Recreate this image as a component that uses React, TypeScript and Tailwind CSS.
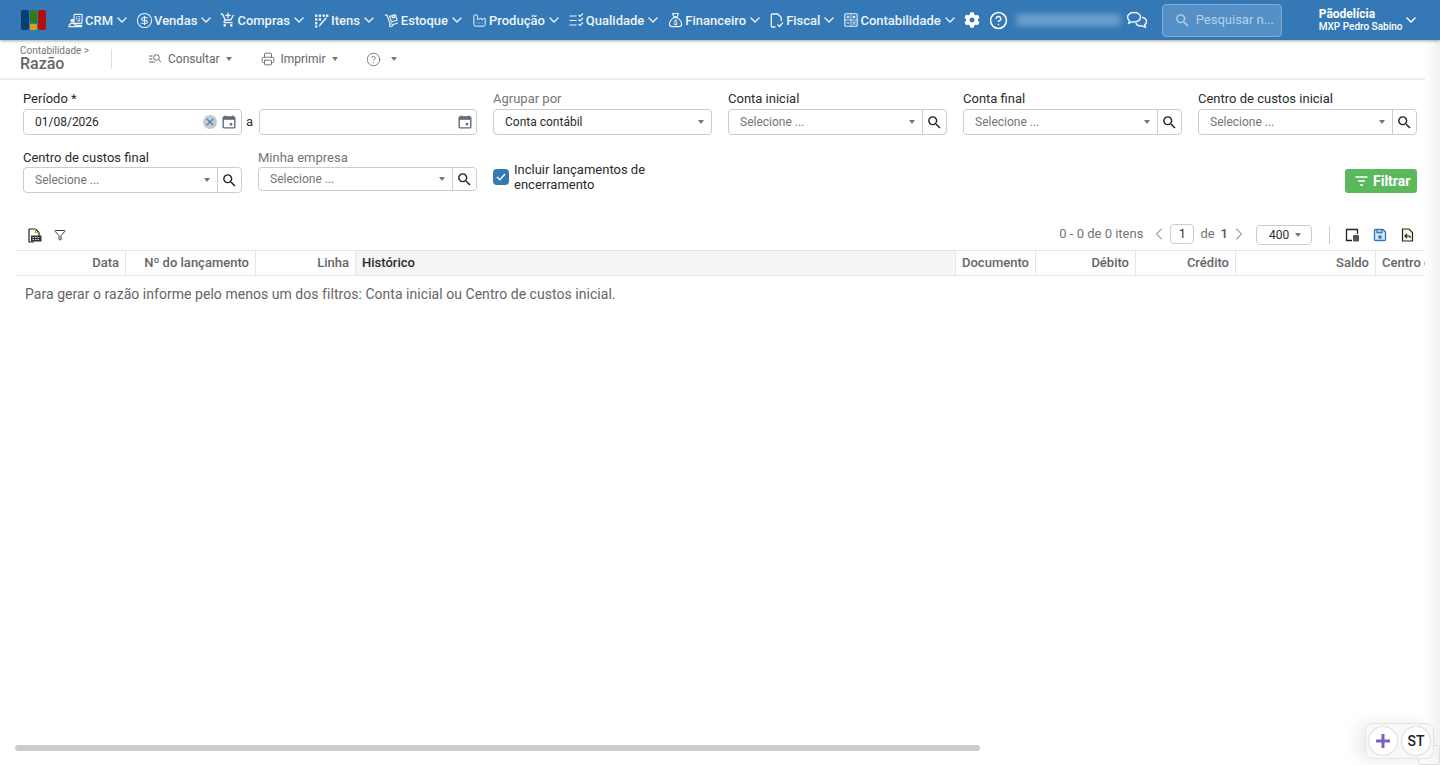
import React from 'react';
import { ChevronDown, ChevronLeft, ChevronRight, CircleDollarSign, CircleHelp, Factory, Funnel, Printer } from 'lucide-react';
import { FaCog } from 'react-icons/fa';
import { MdOutlineAddShoppingCart, MdSearch } from 'react-icons/md';

const IconCrm = () => (
  <svg width="15" height="15" viewBox="0 0 16 16" fill="none" stroke="currentColor" strokeWidth="1.2">
    <rect x="6.5" y="1.5" width="8.5" height="9.5" rx="0.6" />
    <path d="M8.5 4h1.4M11 4h2M8.5 6.2h1.4M11 6.2h2M10 8.4h3" />
    <circle cx="4.5" cy="8" r="2" fill="currentColor" stroke="none" />
    <path d="M1 14.500c0-2.400 1.400-3.500 3.500-3.500S8 12 8 13.200h6.500v1.300z" />
  </svg>
);

const IconItens = () => (
  <svg width="15" height="15" viewBox="0 0 15 15" fill="currentColor">
    <rect x="1" y="1.500" width="2.400" height="2.400" />
    <rect x="4.800" y="1.500" width="2.400" height="2.400" />
    <rect x="8.600" y="1.500" width="2.400" height="2.400" />
    <rect x="12" y="1.500" width="2.400" height="2.400" />
    <rect x="1" y="5.300" width="2.400" height="2.400" />
    <rect x="4.800" y="5.300" width="2.400" height="2.400" />
    <rect x="1" y="9.100" width="2.400" height="2.400" />
    <rect x="1" y="12.500" width="2.400" height="2" />
    <path d="M13 5 6.800 12.300l-1.600 1.700.2-2.400L11.500 4.500z" />
  </svg>
);

const IconEstoque = () => (
  <svg width="15" height="15" viewBox="0 0 16 16" fill="none" stroke="currentColor" strokeWidth="1.200">
    <path d="M1 2.500 3 2l3.500 9.500" />
    <circle cx="7.500" cy="13" r="1.600" />
    <path d="m9.500 12.500 5.500-2" />
    <path d="m6 3.500 6-1.800 2 6-6 1.800zM8.500 2.700l.8 2.500 2-.6-.8-2.500" />
  </svg>
);

const IconQualidade = () => (
  <svg width="15" height="15" viewBox="0 0 15 15" fill="none" stroke="currentColor" strokeWidth="1.200">
    <path d="M0.500 3h7M0.500 7.500h7M0.500 12h7" />
    <path d="m9.500 2 1.500 1.500 3-3M9.500 6.500 11 8l3-3M9.500 11l1.500 1.500 3-3" />
  </svg>
);

const IconBag = () => (
  <svg width="15" height="16" viewBox="0 0 16 17" fill="none" stroke="currentColor" strokeWidth="1.200">
    <path d="M5 1.500h6L9.800 5H6.200zM6.200 5h3.600" />
    <path d="M6 6C3.500 8 1.500 10.500 1.500 13c0 2 1.500 2.500 3 2.500h7c1.500 0 3-.5 3-2.500 0-2.500-2-5-4.500-7z" />
    <text x="8" y="13.500" fontSize="7.500" fontWeight="700" textAnchor="middle" fill="currentColor" stroke="none">$</text>
  </svg>
);

const IconFiscal = () => (
  <svg width="14" height="15" viewBox="0 0 14 15" fill="none" stroke="currentColor" strokeWidth="1.300">
    <path d="M5.500 14H2.300a1 1 0 0 1-1-1V2a1 1 0 0 1 1-1h5.500l3.500 3.500V8" />
    <path d="m7.500 11.500 2 2 3.500-4" />
  </svg>
);

const IconContabil = () => (
  <svg width="14" height="14" viewBox="0 0 14 14" fill="none" stroke="currentColor" strokeWidth="1.100">
    <rect x="0.800" y="0.800" width="12.400" height="12.400" rx="1" />
    <path d="M0.800 7h12.400M7 0.800v12.400" strokeWidth="0.800" />
    <path d="M2.500 4h3M4 2.500v3M8.800 2.800l2.400 2.400M11.200 2.800 8.800 5.200M2.500 10h3M8.500 9.200h3M8.500 11h3" />
  </svg>
);

const IconChat = () => (
  <svg width="22" height="18" viewBox="0 0 22 18" fill="none" stroke="currentColor" strokeWidth="1.500">
    <path d="M8 1.500c-3.600 0-6.500 2-6.500 4.700 0 1.400.8 2.600 2 3.500l-.8 2.600 3.400-1.400c.6.100 1.200.2 1.900.2 3.600 0 6.500-2.100 6.500-4.900S11.600 1.500 8 1.500z" />
    <path d="M16 6.300c2.600.5 4.500 2.100 4.500 4.200 0 1.300-.7 2.400-1.800 3.200l.7 2.600-3.200-1.400c-2.600.4-5.300-.5-6.300-2.700" />
  </svg>
);

const IconConsultar = () => (
  <svg width="14" height="12" viewBox="0 0 14 12" fill="none" stroke="#666" strokeWidth="1">
    <path d="M1 3h3.500M1 6h3.500M1 9h6" />
    <circle cx="8.500" cy="4.500" r="2.800" />
    <path d="m10.500 6.500 2.500 2.500" />
  </svg>
);

const IconCalendar = () => (
  <svg width="14" height="14" viewBox="0 0 14 14" className="shrink-0">
    <path d="M3.500 0.500v2M10.500 0.500v2" stroke="#5f6b76" strokeWidth="1.400" />
    <rect x="1.200" y="1.900" width="11.600" height="11" rx="1" fill="none" stroke="#5f6b76" strokeWidth="1.400" />
    <rect x="1.200" y="1.900" width="11.600" height="2.900" fill="#5f6b76" />
    <rect x="7.800" y="8" width="2.400" height="2.400" fill="#5f6b76" />
  </svg>
);

const IconExportDoc = () => (
  <svg width="15" height="15" viewBox="0 0 15 15" fill="none">
    <path d="M2 1h6.500L12 4.500V8M2 1v13h5" stroke="#222" strokeWidth="1.200" />
    <path d="M8.500 1v3.500H12" stroke="#c98a1c" strokeWidth="1" />
    <rect x="4" y="7.500" width="10.500" height="6" fill="#333" />
    <path d="M5.500 9.500h7.500M5.500 11.500h7.500" stroke="#fff" strokeWidth="0.800" strokeDasharray="1.500 1" />
  </svg>
);

const IconColumns = () => (
  <svg width="15" height="14" viewBox="0 0 15 14" fill="none">
    <path d="M7 12.500H1.500v-11h11V6" stroke="#222" strokeWidth="1.300" />
    <rect x="8" y="7" width="6" height="6.500" rx="0.800" fill="#555" />
  </svg>
);

const IconSave = () => (
  <svg width="14" height="14" viewBox="0 0 14 14" fill="none" stroke="#3478b5" strokeWidth="1.300">
    <path d="M1.500 2.500a1 1 0 0 1 1-1h7.500l2.500 2.500v7.500a1 1 0 0 1-1 1h-9a1 1 0 0 1-1-1z" fill="#d6e6f4" />
    <path d="M4 1.500v3h5v-3" />
    <circle cx="7" cy="9" r="1.200" fill="#3478b5" />
  </svg>
);

const IconRestore = () => (
  <svg width="13" height="14" viewBox="0 0 13 14" fill="none" stroke="#222" strokeWidth="1.200">
    <path d="M1.500 1h6.500l3.500 3.500V13h-10z" fill="#fdf6e3" />
    <path d="M4 8h5M6 6 4 8l2 2M9 8v2" />
  </svg>
);

const Caret = () => <span className="w-0 h-0 border-x-[3.5px] border-x-transparent border-t-[4px] border-t-[#777]" />;

const navItems: { label: string; icon: React.ReactNode }[] = [
  { label: 'CRM', icon: <IconCrm /> },
  { label: 'Vendas', icon: <CircleDollarSign size={17} strokeWidth={1.5} className="-mx-[1px]" /> },
  { label: 'Compras', icon: <MdOutlineAddShoppingCart size={16} className="-mx-[1px]" /> },
  { label: 'Itens', icon: <IconItens /> },
  { label: 'Estoque', icon: <IconEstoque /> },
  { label: 'Produção', icon: <Factory size={15} strokeWidth={1.6} /> },
  { label: 'Qualidade', icon: <IconQualidade /> },
  { label: 'Financeiro', icon: <IconBag /> },
  { label: 'Fiscal', icon: <IconFiscal /> },
  { label: 'Contabilidade', icon: <IconContabil /> },
];

const Header = () => (
  <header className="h-[40px] shrink-0 bg-[#3478b5] text-[#eef4fa] flex items-center shadow-[0_1px_3px_rgba(0,0,0,0.35)] relative z-10">
    <div className="w-[25px] h-[20px] ml-[21px] mr-[22px] flex gap-[1px] shrink-0">
      <span className="w-[8px] h-full rounded-[2px] bg-[#0b3d73]" />
      <span className="w-[8px] h-full flex flex-col gap-[1px]">
        <span className="h-[13px] rounded-[1px] bg-[#2c7d16]" />
        <span className="flex-1 rounded-[1px] bg-[#dc9c1a]" />
      </span>
      <span className="w-[8px] h-full rounded-[2px] bg-[#b30f0f]" />
    </div>
    <nav className="flex items-center gap-[7px]">
      {navItems.map((item) => (
        <div key={item.label} className="flex items-center">
          {item.icon}
          <span className="ml-[2px] text-[13px] font-medium leading-none">{item.label}</span>
          <ChevronDown size={16} strokeWidth={2} className="ml-[1px]" />
        </div>
      ))}
    </nav>
    <FaCog size={16} className="ml-[6px] text-white" />
    <CircleHelp size={19} strokeWidth={1.9} className="ml-[9px] text-white" />
    <div className="w-[105px] h-[12px] ml-[8px] rounded-sm bg-[#6c9fcd] blur-[3px]" />
    <span className="ml-[5px]">
      <IconChat />
    </span>
    <div className="w-[120px] h-[33px] ml-[14px] rounded-[4px] border border-[#80aad1] bg-[#5490c6] flex items-center text-[#b5d0e8]">
      <MdSearch size={17} className="ml-[11px]" />
      <span className="ml-[5px] text-[13px] whitespace-nowrap">Pesquisar n...</span>
    </div>
    <div className="ml-[37px] text-white w-[88px]">
      <p className="text-[12px] font-bold leading-[14px]">Pãodelícia</p>
      <p className="text-[10px] font-medium leading-[12px] whitespace-nowrap">MXP Pedro Sabino</p>
    </div>
    <ChevronDown size={16} strokeWidth={2.2} className="-ml-[4px] text-white" />
  </header>
);

const SubHeader = () => (
  <div className="h-[40px] shrink-0 flex items-center border-b-2 border-[#ececec] text-[#666]">
    <div className="w-[91px] ml-[20px] -mt-[2px]">
      <p className="mb-[1px] text-[10px] leading-[10px] text-[#777]">Contabilidade &gt;</p>
      <p className="text-[16px] font-medium leading-[14px] text-[#666]">Razão</p>
    </div>
    <div className="w-px h-[20px] bg-[#ddd]" />
    <div className="ml-[36px] flex items-center gap-[6px]">
      <IconConsultar />
      <span className="text-[12px]">Consultar</span>
      <Caret />
    </div>
    <div className="ml-[29px] flex items-center gap-[6px]">
      <Printer size={14} strokeWidth={1.5} />
      <span className="text-[12px]">Imprimir</span>
      <Caret />
    </div>
    <div className="ml-[28px] flex items-center gap-[10px]">
      <CircleHelp size={15} strokeWidth={1.3} />
      <Caret />
    </div>
  </div>
);

const Label = ({ text, muted, tight }: { text: string; muted?: boolean; tight?: boolean }) => (
  <label className={`block text-[13px] leading-[15px] ${tight ? 'mb-[2px]' : 'mb-[3px]'} ${muted ? 'text-[#757575]' : 'text-[#2b2b2b]'}`}>{text}</label>
);

const SelectField = ({ label, muted, tight, short }: { label: string; muted?: boolean; tight?: boolean; short?: boolean }) => (
  <div>
    <Label text={label} muted={muted} tight={tight} />
    <div className={`${short ? 'h-[24px]' : 'h-[26px]'} flex border border-[#ccc] rounded-[4px] bg-white`}>
      <div className="flex-1 flex items-center pl-[11px] pr-[7px] text-[12px] text-[#757575]">
        <span className="flex-1">Selecione ...</span>
        <Caret />
      </div>
      <div className="w-[24px] border-l border-[#ccc] flex items-center justify-center text-[#222]">
        <MdSearch size={17} />
      </div>
    </div>
  </div>
);

const FilterForm = () => (
  <form className="grid grid-cols-6 gap-x-[16px] gap-y-[15px] pl-[23px] pr-[23px] pt-[11px]">
    <div>
      <Label text="Período *" />
      <div className="h-[26px] flex items-center border border-[#ccc] rounded-[4px] pl-[11px] pr-[5px]">
        <span className="flex-1 text-[12px] text-[#2b2b2b]">01/08/2026</span>
        <span className="w-[14px] h-[14px] rounded-full bg-[#c4c9ce] flex items-center justify-center mr-[5px]">
          <svg width="8" height="8" viewBox="0 0 8 8" stroke="#3478b5" strokeWidth="1.100">
            <path d="m0.800 0.800 6.400 6.400M7.200 0.800l-6.400 6.400" />
          </svg>
        </span>
        <IconCalendar />
      </div>
    </div>
    <div className="relative">
      <Label text="&nbsp;" />
      <span className="absolute left-[-12px] top-[21px] text-[13px] text-[#333]">a</span>
      <div className="h-[26px] ml-[1px] flex items-center justify-end border border-[#ccc] rounded-[4px] pr-[4px]">
        <IconCalendar />
      </div>
    </div>
    <div>
      <Label text="Agrupar por" muted />
      <div className="h-[26px] flex items-center border border-[#ccc] rounded-[4px] pl-[11px] pr-[7px] text-[12px] text-[#2b2b2b]">
        <span className="flex-1">Conta contábil</span>
        <Caret />
      </div>
    </div>
    <SelectField label="Conta inicial" />
    <SelectField label="Conta final" />
    <SelectField label="Centro de custos inicial" />
    <SelectField label="Centro de custos final" tight />
    <SelectField label="Minha empresa" muted tight short />
    <div className="col-span-2 flex items-center gap-[5px] pt-[10px]">
      <span className="w-[16px] h-[16px] rounded-[4px] bg-[#3478b5] flex items-center justify-center shrink-0">
        <svg width="10" height="8" viewBox="0 0 10 8" fill="none" stroke="#fff" strokeWidth="1.400">
          <path d="m1 4 2.800 2.800L9 1" />
        </svg>
      </span>
      <span className="w-[150px] text-[13px] leading-[15px] text-[#2b2b2b]">Incluir lançamentos de encerramento</span>
    </div>
    <div className="col-span-2 flex items-end justify-end">
      <button type="button" className="w-[72px] h-[24px] pl-[10px] rounded-[3px] bg-[#5cb85c] text-white flex items-center gap-[5px] text-[14px] font-bold">
        <svg width="13" height="10" viewBox="0 0 13 10" stroke="#fff" strokeWidth="1.500">
          <path d="M0.500 1h12M3 5h7M5 9h3" />
        </svg>
        Filtrar
      </button>
    </div>
  </form>
);

const Toolbar = () => (
  <div className="h-[28px] mt-[28px] mb-[1px] flex items-center pl-[27px] pr-[26px] text-[#757575] text-[12px]">
    <IconExportDoc />
    <Funnel size={12} strokeWidth={1.8} className="ml-[12px] text-[#222]" />
    <span className="ml-auto -mt-[2px] text-[13px]">0 - 0 de 0 itens</span>
    <ChevronLeft size={20} strokeWidth={1.5} className="ml-[6px] -mt-[2px] text-[#aaa]" />
    <span className="ml-[1px] -mt-[2px] w-[24px] h-[20px] border border-[#ccc] rounded-[4px] flex items-center justify-center text-[#2b2b2b]">1</span>
    <span className="ml-[6px] -mt-[2px] text-[13px]">de</span>
    <span className="ml-[6px] -mt-[2px] text-[13px] font-medium text-[#555]">1</span>
    <ChevronRight size={20} strokeWidth={1.5} className="ml-[1px] -mt-[2px] text-[#aaa]" />
    <span className="ml-[7px] w-[56px] h-[20px] border border-[#ccc] rounded-[4px] flex items-center pl-[12px] gap-[6px] text-[#2b2b2b]">
      400
      <Caret />
    </span>
    <span className="w-px h-[18px] bg-[#ccc] ml-[17px]" />
    <span className="ml-[15px]"><IconColumns /></span>
    <span className="ml-[13px]"><IconSave /></span>
    <span className="ml-[14px]"><IconRestore /></span>
  </div>
);

const columns: { label: string; width: string; align: string; active?: boolean }[] = [
  { label: 'Data', width: 'w-[111px]', align: 'text-right' },
  { label: 'Nº do lançamento', width: 'w-[130px]', align: 'text-right' },
  { label: 'Linha', width: 'w-[100px]', align: 'text-right' },
  { label: 'Histórico', width: 'w-[600px]', align: 'text-left', active: true },
  { label: 'Documento', width: 'w-[80px]', align: 'text-left' },
  { label: 'Débito', width: 'w-[100px]', align: 'text-right' },
  { label: 'Crédito', width: 'w-[100px]', align: 'text-right' },
  { label: 'Saldo', width: 'w-[140px]', align: 'text-right' },
];

const GridTable = () => (
  <div className="ml-[15px] w-[1410px] overflow-hidden">
    <div className="h-[26px] flex border-y border-[#e6e6e6] text-[13px] font-medium leading-[24px] text-[#666]">
      {columns.map((col) => (
        <div
          key={col.label}
          className={`${col.width} shrink-0 ${col.align} px-[6px] border-r border-[#e6e6e6] whitespace-nowrap ${col.active ? 'bg-[#f5f5f5] text-[#2b2b2b]' : ''}`}
        >
          {col.label}
        </div>
      ))}
      <div className="flex-1 pl-[6px] whitespace-nowrap overflow-hidden">Centro de custos</div>
    </div>
    <p className="pl-[10px] pt-[10px] text-[14px] leading-[16px] tracking-[0.04px] text-[#666]">
      Para gerar o razão informe pelo menos um dos filtros: Conta inicial ou Centro de custos inicial.
    </p>
  </div>
);

export default function App() {
  return (
    <div className="h-[765px] overflow-hidden relative flex flex-col bg-white font-['Roboto',sans-serif]">
      <Header />
      <SubHeader />
      <FilterForm />
      <Toolbar />
      <GridTable />
      <div className="mt-auto mb-[14px] ml-[15px] w-[965px] h-[6px] rounded-full bg-[#cdcdcd]" />

      {/* sombra da lateral direita */}
      <div className="absolute right-0 top-[40px] bottom-0 w-[15px] bg-gradient-to-r from-white to-[#f1f1f1]" />

      {/* atalhos flutuantes */}
      <div className="absolute right-0 bottom-0 w-[22px] h-[20px] border border-[#ddd] rounded-[3px]" />
      <div className="absolute left-[1365px] top-[723px] w-[69px] h-[36px] rounded-[8px] bg-[#f8f8f8] border border-[#e4e4e4] shadow-[-8px_0_16px_rgba(0,0,0,0.08)] flex items-center justify-center gap-[5px]">
        <span className="w-[28px] h-[28px] rounded-full bg-white shadow-[0_0_2px_rgba(0,0,0,0.3)] flex items-center justify-center">
          <svg width="14" height="14" viewBox="0 0 14 14" stroke="#7a5fc4" strokeWidth="3">
            <path d="M7 0v14M0 7h14" />
          </svg>
        </span>
        <span className="w-[28px] h-[28px] rounded-full bg-white shadow-[0_0_2px_rgba(0,0,0,0.3)] flex items-center justify-center text-[14px] font-medium text-[#222]">ST</span>
      </div>
    </div>
  );
}
